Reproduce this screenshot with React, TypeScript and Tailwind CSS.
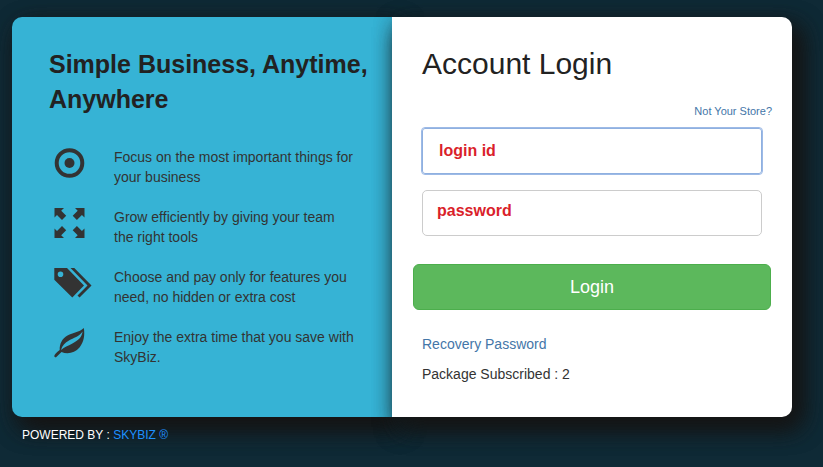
import type { ReactNode } from 'react';

type Feature = {
  icon: ReactNode;
  text: string;
};

function TargetIcon() {
  return (
    <svg viewBox="0 0 38 30" className="h-[30px] w-[38px]" aria-hidden="true">
      <circle cx="15.5" cy="15" r="12.8" fill="none" stroke="#333" strokeWidth="4" />
      <circle cx="15.5" cy="15" r="5" fill="#333" />
    </svg>
  );
}

function ExpandIcon() {
  return (
    <svg viewBox="0 0 38 30" className="h-[30px] w-[38px]" fill="#333" aria-hidden="true">
      <path d="M.5 0h9.500L7.200 2.800l5 5-4.200 4.200-5-5L.5 9.500z" />
      <path d="M30.500 0v9.500l-2.600-2.500-5 5-4.200-4.200 5-5L21 0z" />
      <path d="M.5 30v-9.500L3 23l5-5 4.200 4.200-5 5L10 30z" />
      <path d="M30.500 30H21l2.700-2.800-5-5 4.200-4.200 5 5 2.600-2.500z" />
    </svg>
  );
}

function TagsIcon() {
  return (
    <svg viewBox="0 0 38 30" className="h-[30px] w-[38px]" fill="#333" aria-hidden="true">
      <path
        fillRule="evenodd"
        d="M.3 0h12.700L30 17.500 18.300 29.500.3 11.800zM6.500 3.500a2.800 2.800 0 1 0 0 5.600 2.800 2.800 0 0 0 0-5.600z"
      />
      <path d="M16.500 0h3.800L37.500 17.500 25.500 29.500l-2-2 10-10z" />
    </svg>
  );
}

function LeafIcon() {
  return (
    <svg viewBox="0 0 38 30" className="h-[30px] w-[38px]" fill="#333" aria-hidden="true">
      <path
        fillRule="evenodd"
        d="M29.800 0C31 7 30 14 25.500 19.500 21 25 13.500 26.500 7.500 24L1.800 29.600.2 28.500c0-2 2.300-4 5.500-6.500C5.500 16 8 10.500 13.500 7.500 19 4.500 25 4.500 29.800 0zM28.600 3.500C25 8.500 19.500 10 15 12.500 11 14.800 8 17.500 7 22c3.500-3 7-4.300 11-6.300C24 12.700 27.800 9.500 28.600 3.500z"
      />
    </svg>
  );
}

const features: Feature[] = [
  { icon: <TargetIcon />, text: 'Focus on the most important things for your business' },
  { icon: <ExpandIcon />, text: 'Grow efficiently by giving your team the right tools' },
  { icon: <TagsIcon />, text: 'Choose and pay only for features you need, no hidden or extra cost' },
  { icon: <LeafIcon />, text: 'Enjoy the extra time that you save with SkyBiz.' },
];

function IntroPanel() {
  return (
    <section className="rounded-l-[10px] bg-[#36b3d5] pt-[30px] pr-5 pb-[50px] pl-[37px] shadow-[8px_10px_25px_#151515,8px_10px_25px_#151515]">
      <h2 className="text-[25px] leading-[35px] font-bold text-[#222]">
        Simple Business, Anytime, Anywhere
      </h2>
      <ul className="mt-[30px] flex flex-col gap-5 pr-4 pl-[5px]">
        {features.map((feature) => (
          <li key={feature.text} className="flex items-start gap-[22px]">
            <span className="shrink-0 pt-px">{feature.icon}</span>
            <p className="text-sm leading-5 text-[#333]">{feature.text}</p>
          </li>
        ))}
      </ul>
    </section>
  );
}

function LoginPanel() {
  return (
    <section className="rounded-r-[10px] bg-white px-5 pt-[30px] shadow-[8px_10px_25px_#151515,8px_10px_25px_#151515]">
      <h1 className="px-[10px] text-[30px] leading-[34px] text-[#222]">Account Login</h1>
      <div className="mt-5 text-right text-[11px] leading-5">
        <a href="#store" className="text-[#4476a8]">Not Your Store?</a>
      </div>
      <form onSubmit={(e) => e.preventDefault()}>
        <div className="flex flex-col gap-4 px-[10px] pt-[7px]">
          <input
            type="text"
            aria-label="Login id"
            placeholder="login id"
            className="h-[46px] w-full rounded-[3px] border border-[#8fb0e0] px-4 text-base font-bold outline-1 outline-[#9dbae6] placeholder:text-[#da1f2b]"
          />
          <input
            type="password"
            aria-label="Password"
            placeholder="password"
            className="h-[46px] w-full rounded-[5px] border border-[#ccc] px-[14px] pb-1 text-base font-bold outline-none placeholder:text-[#da1f2b]"
          />
        </div>
        <div className="px-px pt-7">
          <button
            type="submit"
            className="block h-[46px] w-full rounded-md border border-[#4cae4c] bg-[#5cb85c] text-lg text-white"
          >
            Login
          </button>
        </div>
      </form>
      <div className="mt-6 flex flex-col gap-[10px] px-[10px] text-sm leading-5">
        <a href="#recovery" className="text-[#4476a8]">Recovery Password</a>
        <p className="text-[#333]">Package Subscribed : 2</p>
      </div>
    </section>
  );
}

export default function App() {
  return (
    <div className="min-h-screen bg-[#0f2a36] pt-[17px] pr-[31px] pl-3 font-['Liberation_Sans',Arial,sans-serif]">
      <main className="grid grid-cols-[19fr_20fr]">
        <IntroPanel />
        <LoginPanel />
      </main>
      <footer className="relative px-[10px] pt-2 text-xs leading-5 text-white">
        POWERED BY : <a href="#skybiz" className="text-[#1e90ff]">SKYBIZ ®</a>
      </footer>
    </div>
  );
}
